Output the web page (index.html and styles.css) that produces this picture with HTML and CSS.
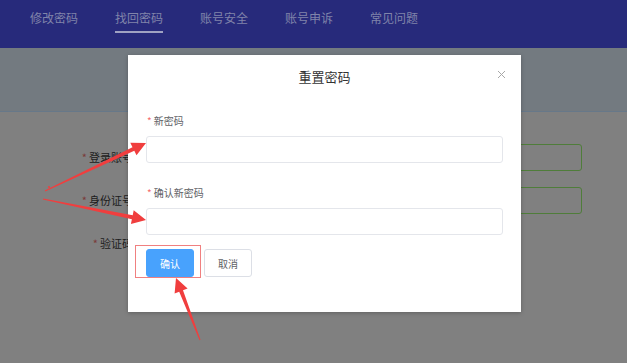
FILE: index.html
```html
<!DOCTYPE html>
<html lang="zh-CN">
<head>
    <meta charset="UTF-8">
    <title>找回密码</title>
    <link rel="stylesheet" href="styles.css">
</head>
<body>
    <div class="nav">
        <a class="nav-item">修改密码</a>
        <a class="nav-item active">找回密码</a>
        <a class="nav-item">账号安全</a>
        <a class="nav-item">账号申诉</a>
        <a class="nav-item">常见问题</a>
    </div>
    <div class="banner"></div>

    <div class="bg-form">
        <div class="bg-row">
            <label class="bg-label"><i>*</i>登录账号</label>
            <div class="bg-input"></div>
        </div>
        <div class="bg-row">
            <label class="bg-label"><i>*</i>身份证号</label>
            <div class="bg-input"></div>
        </div>
        <div class="bg-row">
            <label class="bg-label"><i>*</i>验证码</label>
        </div>
    </div>

    <!-- dialog -->
    <div class="dialog">
        <div class="dialog-header">
            <span class="dialog-title">重置密码</span>
            <svg class="dialog-close" width="9" height="9" viewBox="0 0 9 9">
                <path d="M1 1L8 8M8 1L1 8" stroke="#a8a8a8" stroke-width="1" fill="none"/>
            </svg>
        </div>
        <div class="dialog-body">
            <div class="form-item">
                <label class="form-label"><i>*</i>新密码</label>
                <input type="password" class="form-input">
            </div>
            <div class="form-item">
                <label class="form-label"><i>*</i>确认新密码</label>
                <input type="password" class="form-input">
            </div>
            <div class="dialog-footer">
                <button class="btn btn-primary">确认</button>
                <button class="btn">取消</button>
            </div>
        </div>
    </div>

    <!-- annotations -->
    <svg class="marks" width="627" height="363" viewBox="0 0 627 363">
        <g fill="#f03e3e">
            <polygon points="45.2,191.5 134.3,150.8 136.5,155.2 146,143 130.3,142.8 132.5,147.2 44.8,190.5"/>
            <polygon points="42.9,199.5 131.9,219.2 130.9,224.1 146,220 133.7,210.3 132.7,215.2 43.1,198.5"/>
            <polygon points="200.5,339.8 183.0,290.3 187.6,288.5 176,278 174.6,293.5 179.2,291.7 199.5,340.2"/>
            <circle cx="49" cy="187" r="1"/>
        </g>
        <rect x="135.5" y="245.5" width="65" height="32" fill="none" stroke="#f08080" stroke-width="1"/>
    </svg>
</body>
</html>
```

FILE: styles.css
```css
* {
    box-sizing: border-box;
    margin: 0;
    padding: 0;
}

body {
    width: 627px;
    height: 363px;
    overflow: hidden;
    position: relative;
    background-color: #808080;
    font-family: "Noto Sans CJK SC", "Liberation Sans", sans-serif;
}

.nav {
    height: 48px;
    background-color: #272a7b;
    display: flex;
    gap: 37px;
    padding-left: 30px;
}

.nav-item {
    padding-top: 10px;
    padding-bottom: 5px;
    height: 33px;
    font-size: 12px;
    line-height: 16px;
    color: #8084aa;
    border-bottom: 2px solid transparent;
}

.nav-item.active {
    border-bottom-color: #9fa2c2;
}

.banner {
    height: 64px;
    background-color: #737a80;
    border-bottom: 1px solid #677889;
}

.bg-form {
    padding-top: 32px;
    display: flex;
    flex-direction: column;
    gap: 16px;
}

.bg-row {
    display: flex;
    height: 27px;
    gap: 12px;
}

.bg-label {
    width: 133px;
    text-align: right;
    font-size: 11px;
    line-height: 27px;
    color: #1c1c1c;
}

.bg-label i,
.form-label i {
    font-style: normal;
    margin-right: 2px;
}

.bg-label i {
    color: #7b3a3a;
}

.bg-input {
    width: 437px;
    border: 1px solid #4f7d3a;
    border-radius: 3px;
}

.dialog {
    position: absolute;
    top: 55px;
    left: 128px;
    width: 393px;
    height: 257px;
    background-color: #fff;
    box-shadow: 0 1px 4px rgba(0, 0, 0, 0.25);
}

.dialog-header {
    position: relative;
    height: 44px;
    text-align: center;
}

.dialog-title {
    font-size: 13px;
    line-height: 44px;
    color: #333;
}

.dialog-close {
    position: absolute;
    right: 15px;
    top: 15px;
}

.dialog-body {
    padding: 12px 18px 0;
}

.form-item {
    margin-bottom: 20px;
}

.form-item:nth-child(2) {
    margin-bottom: 14px;
}

.form-label {
    display: block;
    height: 20px;
    margin-bottom: 5px;
    padding-left: 1px;
    font-size: 10px;
    line-height: 20px;
    color: #606266;
}

.form-label i {
    color: #f56c6c;
}

.form-input {
    display: block;
    width: 100%;
    height: 27px;
    border: 1px solid #e4e6eb;
    border-radius: 3px;
    outline: none;
}

.dialog-footer {
    display: flex;
    gap: 10px;
}

.btn {
    width: 48px;
    height: 28px;
    border: 1px solid #dcdfe6;
    border-radius: 3px;
    background-color: #fff;
    color: #606266;
    font-family: inherit;
    font-size: 10px;
}

.btn-primary {
    background-color: #48a2fd;
    border-color: #48a2fd;
    color: #fff;
}

.marks {
    position: absolute;
    top: 0;
    left: 0;
    pointer-events: none;
}
```
